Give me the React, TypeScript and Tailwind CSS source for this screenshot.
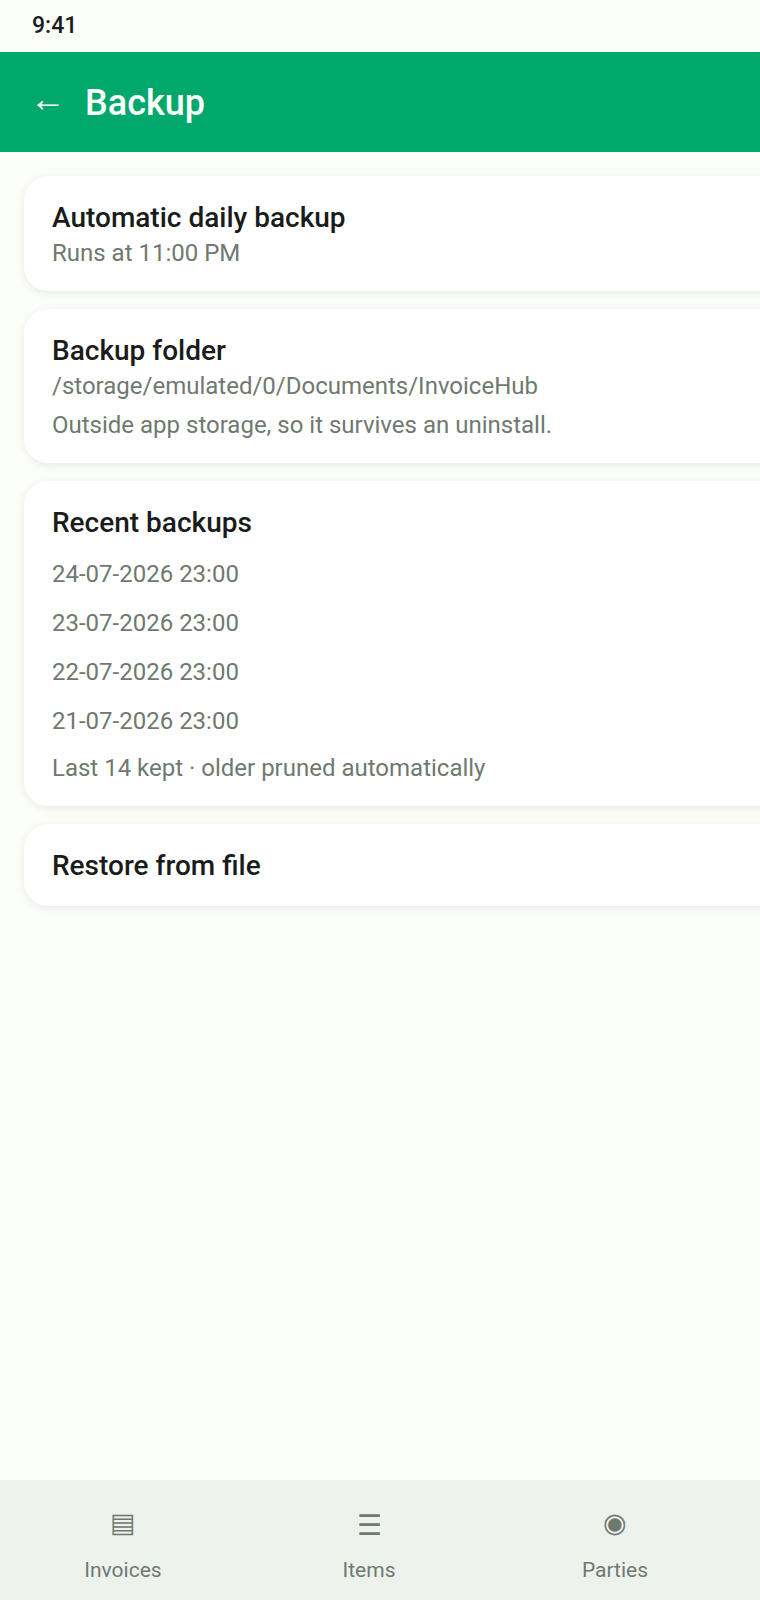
export default function App() {
  const Title = ({ children }: { children: React.ReactNode }) => (
    <div className="text-[28px] leading-[36px] font-medium text-[#191c1a]">{children}</div>
  );
  const Sub = ({ children, className = "" }: { children: React.ReactNode; className?: string }) => (
    <div className={`text-[24px] leading-[34px] text-[#6f7970] ${className}`}>{children}</div>
  );
  const card = "ml-6 -mr-6 rounded-l-[24px] bg-white px-7 shadow-[0_2px_8px_rgba(0,0,0,0.08)]";
  return (
    <div className="relative h-[1600px] w-[760px] overflow-hidden bg-[#fbfdf8] font-['Roboto',sans-serif]">
      <div className="flex h-[52px] items-center pl-8 text-[23px] font-medium text-[#191c1a]">9:41</div>
      <div className="flex h-[100px] items-center gap-[19px] bg-[#00a86b] pl-[30px] text-white">
        <span className="-translate-y-[3px] text-[36px]">←</span>
        <span className="translate-y-px text-[36px] font-medium">Backup</span>
      </div>
      <div className="flex flex-col gap-[18px] pt-6">
        <div className={`${card} h-[115px] pt-6`}>
          <Title>Automatic daily backup</Title>
          <Sub>Runs at 11:00 PM</Sub>
        </div>
        <div className={`${card} h-[154px] pt-6`}>
          <Title>Backup folder</Title>
          <Sub>/storage/emulated/0/Documents/InvoiceHub</Sub>
          <Sub className="mt-[5px]">Outside app storage, so it survives an uninstall.</Sub>
        </div>
        <div className={`${card} h-[325px] pt-6`}>
          <Title>Recent backups</Title>
          <div className="mt-4 flex flex-col gap-[15px]">
            <Sub>24-07-2026 23:00</Sub>
            <Sub>23-07-2026 23:00</Sub>
            <Sub>22-07-2026 23:00</Sub>
            <Sub>21-07-2026 23:00</Sub>
          </div>
          <Sub className="mt-[13px]">Last 14 kept · older pruned automatically</Sub>
        </div>
        <div className={`${card} h-[82px] pt-6`}>
          <Title>Restore from file</Title>
        </div>
      </div>
      <div className="absolute bottom-0 left-0 flex h-[120px] w-[760px] bg-[#eef2ed] pr-[22px] text-[#6f7970]">
        <div className="flex flex-1 flex-col items-center pt-[20px]">
          <span className="h-[56px] text-[27px] leading-[46px]">▤</span>
          <span className="text-[21px] leading-[28px]">Invoices</span>
        </div>
        <div className="flex flex-1 flex-col items-center pt-[20px]">
          <span className="h-[56px] translate-y-[3px] text-[28px] leading-[46px]">☰</span>
          <span className="text-[21px] leading-[28px]">Items</span>
        </div>
        <div className="flex flex-1 flex-col items-center pt-[20px]">
          <span className="h-[56px] text-[27px] leading-[46px]">◉</span>
          <span className="text-[21px] leading-[28px]">Parties</span>
        </div>
      </div>
    </div>
  );
}
